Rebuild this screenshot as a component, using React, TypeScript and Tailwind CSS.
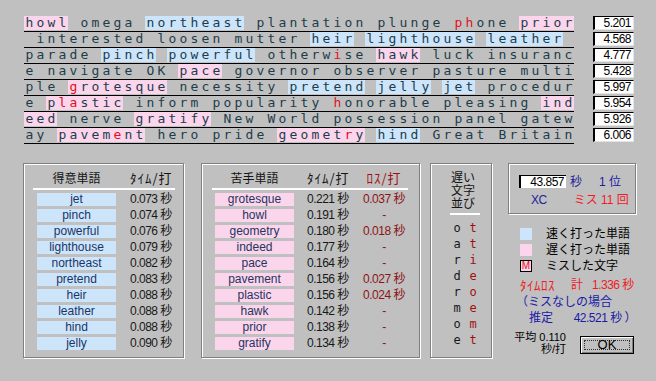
import React from "react";

type Seg = [string, ("b" | "p" | "")?, number[]?];

const rows: Seg[][] = [
  [["howl", "p"], [" omega "], ["northeast", "b"], [" plantation plunge "], ["phone", "", [0, 1]], [" "], ["prior", "p"]],
  [[" interested loosen mutter "], ["heir", "b"], [" "], ["lighthouse", "b"], [" "], ["leather", "b"], [" "]],
  [["parade "], ["pinch", "b"], [" "], ["powerful", "b"], [" "], ["otherwise", "", [6]], [" "], ["hawk", "p"], [" luck insuranc"]],
  [["e navigate OK "], ["pace", "p"], [" governor observer pasture multi"]],
  [["ple "], ["grotesque", "p", [0]], [" necessity "], ["pretend", "b"], [" "], ["jelly", "b"], [" "], ["jet", "b"], [" procedur"]],
  [["e "], ["plastic", "p", [1, 2]], [" inform popularity "], ["honorable", "", [0]], [" pleasing "], ["ind", "p"]],
  [["eed", "p"], [" nerve "], ["gratify", "p"], [" New World possession panel gatew"]],
  [["ay "], ["pavement", "p", [5]], [" hero pride "], ["geometry", "p", [6]], [" "], ["hind", "b"], [" Great Britain"]],
];

const nums = ["5.201", "4.568", "4.777", "5.428", "5.997", "5.954", "5.926", "6.006"];

const good: [string, string][] = [
  ["jet", "0.073 秒"],
  ["pinch", "0.074 秒"],
  ["powerful", "0.076 秒"],
  ["lighthouse", "0.079 秒"],
  ["northeast", "0.082 秒"],
  ["pretend", "0.083 秒"],
  ["heir", "0.088 秒"],
  ["leather", "0.088 秒"],
  ["hind", "0.088 秒"],
  ["jelly", "0.090 秒"],
];

const bad: [string, string, string][] = [
  ["grotesque", "0.221 秒", "0.037 秒"],
  ["howl", "0.191 秒", "-"],
  ["geometry", "0.180 秒", "0.018 秒"],
  ["indeed", "0.177 秒", "-"],
  ["pace", "0.164 秒", "-"],
  ["pavement", "0.156 秒", "0.027 秒"],
  ["plastic", "0.156 秒", "0.024 秒"],
  ["hawk", "0.142 秒", "-"],
  ["prior", "0.138 秒", "-"],
  ["gratify", "0.134 秒", "-"],
];

const slow: [string, string][] = [
  ["o", "t"],
  ["a", "t"],
  ["r", "i"],
  ["d", "e"],
  ["r", "o"],
  ["m", "e"],
  ["o", "m"],
  ["e", "t"],
];

const etched = "border border-[#808080] shadow-[inset_1px_1px_0_#ffffff,1px_1px_0_#ffffff]";

function Row({ segs }: { segs: Seg[] }) {
  const cells: React.ReactNode[] = [];
  let k = 0;
  segs.forEach(([t, bg, red]) => {
    t.split("").forEach((ch, i) => {
      const isRed = red ? red.includes(i) : false;
      const bgc =
        bg === "b" ? "bg-[#cce5fa]" : bg === "p" ? "bg-[#fbd5ec]" : "";
      cells.push(
        <span
          key={k++}
          className={`inline-flex w-[11px] h-[14px] justify-center ${bgc} ${
            isRed ? "text-[#e0101e]" : "text-[#1d3c4a]"
          }`}
        >
          {ch === " " ? "\u00a0" : ch}
        </span>
      );
    });
  });
  return (
    <div className="flex h-[16px] border-b border-black font-['DejaVu_Sans_Mono',monospace] text-[13px] leading-[14px]">
      {cells}
    </div>
  );
}

export default function App() {
  return (
    <div className="w-[656px] h-[381px] bg-[#c0c0c0] overflow-hidden font-['Liberation_Sans','Noto_Sans_CJK_JP',sans-serif] text-[12px] text-[#141414]">
      {/* top text area */}
      <div className="flex pt-[16px] pl-[24px]">
        <div className="w-[550px]">
          {rows.map((r, i) => (
            <Row key={i} segs={r} />
          ))}
        </div>
        <div className="ml-[19px] w-[41px]">
          {nums.map((n) => (
            <div key={n} className="h-[16px]">
              <div className="h-[14px] bg-white border-t border-l-2 border-t-black border-l-black border-r border-b border-r-[#e4e4e4] border-b-[#e4e4e4] text-right pr-[2px] leading-[12px] tracking-[-0.5px] text-black">
                {n}
              </div>
            </div>
          ))}
        </div>
      </div>

      {/* bottom area */}
      <div className="flex mt-[19px] pl-[23px]">
        {/* good words */}
        <div className={`w-[161px] h-[195px] ${etched}`}>
          <div className="flex mt-[7px] h-[14px] items-center whitespace-nowrap">
            <div className="ml-[13px] w-[79px] text-center text-[12px] font-['Noto_Sans_CJK_JP',sans-serif]">得意単語</div>
            <div className="ml-[14px] font-['Noto_Sans_CJK_JP',sans-serif] text-[13px] tracking-[1px]">ﾀｲﾑ/打</div>
          </div>
          <div className="ml-[9px] mt-[3px] w-[142px] h-[2px] bg-white" />
          <div className="mt-[3px]">
            {good.map(([w, t]) => (
              <div key={w} className="flex h-[16px] items-start whitespace-nowrap">
                <div className="ml-[13px] w-[79px] h-[13px] bg-[#cce5fa] text-center leading-[13px] text-[#1a3468]">{w}</div>
                <div className="ml-[14px] h-[13px] leading-[13px] tracking-[-0.5px] text-[#181818]">{t}</div>
              </div>
            ))}
          </div>
        </div>

        {/* bad words */}
        <div className={`ml-[17px] w-[219px] h-[195px] ${etched}`}>
          <div className="flex mt-[7px] h-[14px] items-center whitespace-nowrap">
            <div className="ml-[13px] w-[79px] text-center text-[12px] font-['Noto_Sans_CJK_JP',sans-serif]">苦手単語</div>
            <div className="ml-[13px] w-[57px] font-['Noto_Sans_CJK_JP',sans-serif] text-[13px] tracking-[1px]">ﾀｲﾑ/打</div>
            <div className="w-[40px] flex justify-center font-['Noto_Sans_CJK_JP',sans-serif] text-[13px] tracking-[1px] text-[#a01010]">ﾛｽ/打</div>
          </div>
          <div className="ml-[10px] mt-[3px] w-[196px] h-[2px] bg-white" />
          <div className="mt-[3px]">
            {bad.map(([w, t, l]) => (
              <div key={w} className="flex h-[16px] items-start whitespace-nowrap">
                <div className="ml-[13px] w-[79px] h-[13px] bg-[#fbd5ec] text-center leading-[13px] text-[#26345e]">{w}</div>
                <div className="ml-[13px] w-[57px] h-[13px] leading-[13px] tracking-[-0.5px] text-[#181818]">{t}</div>
                <div className="w-[40px] h-[13px] leading-[13px] tracking-[-0.5px] flex justify-center text-[#8c1414]">{l}</div>
              </div>
            ))}
          </div>
        </div>

        {/* slow sequence */}
        <div className={`ml-[10px] w-[62px] h-[195px] ${etched}`}>
          <div className="mt-[6px] pl-[4px] h-[39px] text-center leading-[13px] text-[12px] font-['Noto_Sans_CJK_JP',sans-serif]">
            遅い<br />文字<br />並び
          </div>
          <div className="ml-[19px] mt-[4px] w-[30px] h-[2px] bg-white" />
          <div className="mt-[5px] font-['DejaVu_Sans_Mono',monospace] text-[12px]">
            {slow.map(([a, b], i) => (
              <div key={i} className="flex h-[16px] items-center">
                <div className="ml-[21px] w-[10px] text-center text-[#181818]">{a}</div>
                <div className="ml-[6px] w-[10px] text-center text-[#a01010]">{b}</div>
              </div>
            ))}
          </div>
        </div>

        {/* result */}
        <div className="ml-[16px] w-[128px] whitespace-nowrap">
          <div className={`h-[51px] ${etched}`}>
            <div className="flex mt-[11px] h-[13px] items-center">
              <div className="ml-[10px] w-[47px] h-[13px] bg-white border-t border-l-2 border-t-black border-l-black text-right pr-[2px] leading-[12px] tracking-[-0.5px] text-black">
                43.857
              </div>
              <div className="ml-[4px] text-[#22229a]">秒</div>
              <div className="ml-[17px] text-[#1a1aa8]">1 位</div>
            </div>
            <div className="flex mt-[5px] h-[13px] items-center">
              <div className="ml-[22px] text-[#22229a] tracking-[-0.5px]">XC</div>
              <div className="ml-[27px] text-[#f01c24]">ミス 11 回</div>
            </div>
          </div>

          <div className="mt-[12px] ml-[12px]">
            <div className="flex h-[16px] items-center">
              <div className="w-[12px] h-[12px] bg-[#cce5fa]" />
              <div className="ml-[14px] text-black">速く打った単語</div>
            </div>
            <div className="flex h-[16px] items-center">
              <div className="w-[12px] h-[12px] bg-[#fbd5ec]" />
              <div className="ml-[14px] text-black">遅く打った単語</div>
            </div>
            <div className="flex h-[16px] items-center">
              <div className="w-[12px] h-[12px] bg-[#fbd5ec] border border-black text-[#e01020] text-[10px] leading-[10px] flex items-center justify-center">M</div>
              <div className="ml-[14px] text-black">ミスした文字</div>
            </div>
          </div>

          <div className="mt-[3px] ml-[12px] flex h-[16px] items-center text-[#ee1c24]">
            <div className="w-[51px] font-['Noto_Sans_CJK_JP',sans-serif] text-[13px] tracking-[0.5px]">ﾀｲﾑﾛｽ</div>
            <div className="w-[21px]">計</div>
            <div className="tracking-[-0.5px]">1.336 秒</div>
          </div>
          <div className="mt-[1px] ml-[8px] h-[16px] flex items-center text-[#1a1aa8]">（ミスなしの場合</div>
          <div className="ml-[21px] h-[16px] flex items-center text-[#1a1aa8]">
            <div className="w-[48px]">推定</div>
            <div className="tracking-[-0.5px]">42.521 秒 ）</div>
          </div>

          <div className="mt-[5px] flex">
            <div className="ml-[2px] w-[56px] text-right text-black text-[11px] leading-[12px]">
              <div>平均 0.110</div>
              <div>秒/打</div>
            </div>
            <div className="ml-[14px] mt-[5px] w-[54px] h-[18px] border border-black bg-[#c0c0c0] shadow-[inset_1px_1px_0_#ffffff,inset_-1px_-1px_0_#808080] p-[3px]">
              <div className="h-full border border-dotted border-[#303030] flex items-center justify-center text-[13px] leading-[10px] text-black">OK</div>
            </div>
          </div>
        </div>
      </div>
    </div>
  );
}
